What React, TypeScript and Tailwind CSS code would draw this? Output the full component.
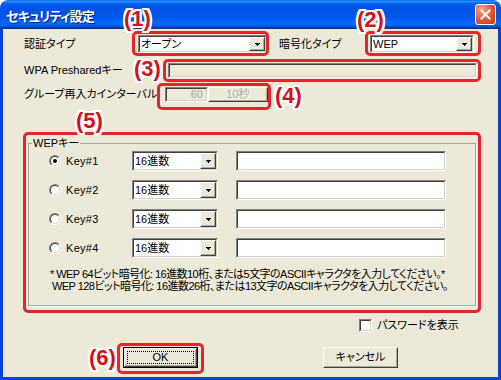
import React from "react";

const F = "font-['Liberation_Sans','Noto_Sans_CJK_JP',sans-serif] [font-feature-settings:'palt']";

type P = { className?: string; inner?: string; children?: React.ReactNode };

function Sunken({ className = "", inner = "bg-white", children }: P) {
  return (
    <div className={`border border-t-[#808080] border-l-[#808080] border-b-white border-r-white ${className}`}>
      <div className={`flex h-full w-full border border-t-[#404040] border-l-[#404040] border-b-[#D4D0C8] border-r-[#D4D0C8] ${inner}`}>
        {children}
      </div>
    </div>
  );
}

function Raised({ className = "", children }: P) {
  return (
    <div className={`border border-t-white border-l-white border-b-[#404040] border-r-[#404040] bg-[#ECE9D8] ${className}`}>
      <div className="flex h-full w-full items-center justify-center border border-t-[#ECE9D8] border-l-[#ECE9D8] border-b-[#ACA899] border-r-[#ACA899]">
        {children}
      </div>
    </div>
  );
}

function Arrow() {
  return (
    <svg width="5" height="3" viewBox="0 0 5 3" shapeRendering="crispEdges">
      <path d="M0 0h5v1H0zM1 1h3v1H1zM2 2h1v1H2z" fill="#000" />
    </svg>
  );
}

function Select({ className = "", value }: { className?: string; value: string }) {
  return (
    <Sunken className={className}>
      <div className="flex flex-1 items-center pl-[1px]">{value}</div>
      <Raised className="h-full w-[16px]">
        <Arrow />
      </Raised>
    </Sunken>
  );
}

function Radio({ checked }: { checked?: boolean }) {
  return (
    <div className="h-[12px] w-[12px] rounded-full border border-t-[#808080] border-l-[#808080] border-b-white border-r-white">
      <div className="flex h-full w-full items-center justify-center rounded-full border border-t-[#404040] border-l-[#404040] border-b-[#D4D0C8] border-r-[#D4D0C8] bg-white">
        {checked ? <div className="h-[4px] w-[4px] rounded-full bg-black" /> : null}
      </div>
    </div>
  );
}

function KeyRow({ n, checked }: { n: number; checked?: boolean }) {
  return (
    <div className="flex h-[20px] items-center">
      <div className="flex w-[83px] items-center">
        <Radio checked={checked} />
        <span className="ml-[5px] tracking-[0.3px]">Key#{n}</span>
      </div>
      <Select className="h-[20px] w-[86px]" value="16進数" />
      <Sunken className="ml-[18px] h-[20px] w-[210px]" />
    </div>
  );
}

function Box({ className = "" }: { className?: string }) {
  return <div className={`absolute rounded-[5px] border-[3px] border-[#E4262C] ${className}`} />;
}

function Tag({ className = "", children }: P) {
  return (
    <div
      className={`absolute font-['Liberation_Sans',sans-serif] text-[22px] font-bold leading-none text-[#D0121B] [text-shadow:2px_0_0_#fff,-2px_0_0_#fff,0_2px_0_#fff,0_-2px_0_#fff,2px_2px_0_#fff,-2px_-2px_0_#fff,2px_-2px_0_#fff,-2px_2px_0_#fff] ${className}`}
    >
      {children}
    </div>
  );
}

export default function App() {
  return (
    <div className={`relative h-[380px] w-[501px] overflow-hidden bg-white text-[11px] leading-[13px] text-black ${F}`}>
      <div className="flex h-full w-full flex-col">
        <div className="flex h-[29px] shrink-0 items-center justify-between rounded-t-[8px] bg-[linear-gradient(180deg,#0058EE_0%,#3593FF_4%,#288EFF_6%,#127DFF_8%,#036FFC_10%,#0262EE_14%,#0057E5_20%,#0054E3_24%,#0055EB_56%,#005BF5_66%,#026AFE_76%,#0062EF_86%,#0052D6_92%,#0040AB_94%,#003092_100%)] pl-[6px] pr-[5px]">
          <span className="pt-[1px] font-['Noto_Sans_CJK_JP',sans-serif] text-[13px] font-bold tracking-[-0.8px] text-white [text-shadow:1px_1px_0_#0A1A8A]">
            セキュリティ設定
          </span>
          <div className="flex h-[21px] w-[21px] items-center justify-center rounded-[3px] border border-white bg-[radial-gradient(circle_at_30%_25%,#F3A48C,#E2532F_55%,#C13A18)]">
            <svg width="11" height="11" viewBox="0 0 11 11">
              <path d="M1.5 1.5l8 8M9.5 1.5l-8 8" stroke="#fff" strokeWidth="2" strokeLinecap="square" />
            </svg>
          </div>
        </div>
        <div className="flex flex-1 border-x-[3px] border-b-[3px] border-[#0842D6]">
          <div className="flex-1 bg-[#ECE9D8] pl-[21px]">
            <div className="mt-[6px] flex h-[18px] items-center">
              <div className="w-[114px]">認証タイプ</div>
              <Select className="h-[18px] w-[129px]" value="オープン" />
              <div className="ml-[12px] w-[91px]">暗号化タイプ</div>
              <Select className="h-[18px] w-[104px]" value="WEP" />
            </div>
            <div className="mt-[10px] flex h-[15px] items-center">
              <div className="w-[144px]">WPA Presharedキー</div>
              <Sunken className="h-[15px] w-[309px]" inner="bg-[#ECE9D8]" />
            </div>
            <div className="mt-[9px] flex h-[15px] items-center">
              <div className="w-[141px]">グループ再入カインターバル</div>
              <Sunken className="h-[15px] w-[43px]" inner="bg-[#ECE9D8] items-center justify-end pr-[3px] text-[#ACA899]">
                60
              </Sunken>
              <Raised className="h-[15px] w-[60px]">
                <span className="text-[#ACA899] [text-shadow:1px_1px_0_#fff]">10秒</span>
              </Raised>
            </div>
            <fieldset className="mt-[35px] ml-[4px] w-[448px] border border-[#ACA899] pb-[13px] shadow-[1px_1px_0_#fff]">
              <legend className="ml-[3px] h-[13px] px-[1px] leading-[13px]">WEPキー</legend>
              <div className="flex flex-col gap-[9px] pt-[1px] pl-[20px]">
                <KeyRow n={1} checked />
                <KeyRow n={2} />
                <KeyRow n={3} />
                <KeyRow n={4} />
              </div>
              <div className="mt-[10px] whitespace-nowrap pl-[20px] leading-[12px] tracking-[-0.55px]">
                <div className="pl-[1px]">* WEP 64ビット暗号化: 16進数10桁、または5文字のASCIIキャラクタを入力してください。*</div>
                <div className="pl-[3px]">WEP 128ビット暗号化: 16進数26桁、または13文字のASCIIキャラクタを入力してください。</div>
              </div>
            </fieldset>
            <div className="mt-[13px] flex h-[13px] items-center pl-[335px]">
              <Sunken className="h-[13px] w-[13px]" />
              <span className="ml-[5px]">パスワードを表示</span>
            </div>
            <div className="mt-[15px] flex pl-[99px]">
              <div className="h-[21px] w-[75px] border border-black">
                <Raised className="h-full w-full">
                  <div className="flex h-[13px] w-[67px] items-center justify-center border border-dotted border-black">OK</div>
                </Raised>
              </div>
              <Raised className="ml-[125px] h-[21px] w-[75px]">キャンセル</Raised>
            </div>
          </div>
        </div>
      </div>

      <Box className="left-[132px] top-[31px] h-[25px] w-[137px]" />
      <Box className="left-[365px] top-[31px] h-[25px] w-[116px]" />
      <Box className="left-[163px] top-[59px] h-[23px] w-[318px]" />
      <Box className="left-[157px] top-[83px] h-[27px] w-[114px]" />
      <Box className="left-[23px] top-[132px] h-[181px] w-[458px]" />
      <Box className="left-[117px] top-[343px] h-[31px] w-[87px]" />

      <Tag className="left-[124px] top-[8px]">(1)</Tag>
      <Tag className="left-[357px] top-[9px]">(2)</Tag>
      <Tag className="left-[134px] top-[58px]">(3)</Tag>
      <Tag className="left-[275px] top-[85px]">(4)</Tag>
      <Tag className="left-[76px] top-[110px]">(5)</Tag>
      <Tag className="left-[89px] top-[347px]">(6)</Tag>
    </div>
  );
}
